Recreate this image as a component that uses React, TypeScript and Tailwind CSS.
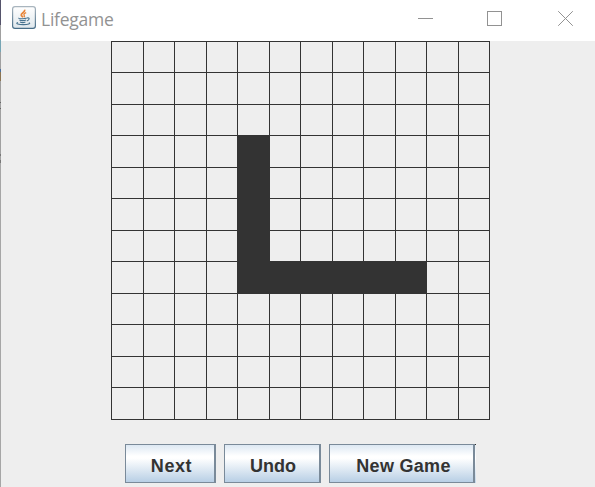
import React from "react";

const SIZE = 12;
const alive = new Set([
  "3-4", "4-4", "5-4", "6-4",
  "7-4", "7-5", "7-6", "7-7", "7-8", "7-9",
]);

function JavaIcon() {
  return (
    <svg width="24" height="23" viewBox="0 0 24 23" fill="none" className="shrink-0">
      <defs>
        <linearGradient id="tile" x1="0" y1="0" x2="0" y2="1">
          <stop offset="0" stopColor="#ffffff" />
          <stop offset="1" stopColor="#dfe7ec" />
        </linearGradient>
        <linearGradient id="edge" x1="0" y1="0" x2="0" y2="1">
          <stop offset="0" stopColor="#a9b5be" />
          <stop offset="1" stopColor="#476d88" />
        </linearGradient>
      </defs>
      <rect x="0.6" y="0.6" width="22.8" height="21.8" rx="2.4" fill="url(#tile)" stroke="url(#edge)" strokeWidth="1.2" />
      <path d="M12.4 3.8c1.5 2.2-3.6 3.3-3.2 5.2.2 1 1.2 1.5 1.9 2.3" stroke="#e8853a" strokeWidth="1.7" />
      <path d="M14.2 6.7c-2 .8-2.8 1.5-2 2.6.5.7.6 1.2-.3 1.9" stroke="#e8853a" strokeWidth="1.3" />
      <path d="M7 12c-1.6.8 6 1 7.8 0M7.4 14c1.4.9 5 .8 6.6 0M8 15.9c1.4.7 4.2.6 5.4 0" stroke="#47728f" strokeWidth="1.1" />
      <path d="M15 12c3-.8 2.8 1.9-.2 3" stroke="#47728f" strokeWidth="1.1" />
      <path d="M6 16.6c-3.4 1.1.8 2 5.4 2 4.7 0 8-1 5.4-1.9" stroke="#47728f" strokeWidth="1.1" />
    </svg>
  );
}

function TitleBar() {
  return (
    <header className="flex h-[41px] items-start bg-white pl-[11px] text-[#929292]">
      <div className="pt-[6px]"><JavaIcon /></div>
      <h1 className="ml-[5px] mt-[7px] w-[73px] whitespace-nowrap font-['Open_Sans',sans-serif] text-[17.5px] leading-[25px] tracking-[-0.25px]">
        Lifegame
      </h1>
      <svg width="15" height="15" className="ml-[304px] mt-[11px] shrink-0" fill="none" stroke="currentColor" shapeRendering="crispEdges">
        <path d="M0 7.5h15" />
      </svg>
      <svg width="15" height="15" className="ml-[54px] mt-[11px] shrink-0" fill="none" stroke="currentColor" shapeRendering="crispEdges">
        <path d="M.5.5h14v14H.5z" />
      </svg>
      <svg width="15" height="15" className="ml-[56px] mt-[11px] shrink-0" fill="none" stroke="currentColor">
        <path d="M.2.2l14.6 14.6M14.8.2L.2 14.8" />
      </svg>
    </header>
  );
}

function Board() {
  return (
    <div className="ml-[110px] grid w-[379px] grid-cols-[repeat(6,32px_31px)] grid-rows-[repeat(6,31px_32px)] border-l border-t border-[#333333]">
      {Array.from({ length: SIZE * SIZE }, (_, i) => {
        const row = Math.floor(i / SIZE);
        const col = i % SIZE;
        return (
          <div
            key={i}
            className={
              alive.has(`${row}-${col}`)
                ? "border-b border-r border-[#333333] bg-[#333333]"
                : "border-b border-r border-[#333333]"
            }
          />
        );
      })}
    </div>
  );
}

function MetalButton({ label, className }: { label: string; className: string }) {
  return (
    <button
      className={`h-[39px] whitespace-nowrap border border-r-2 border-[#7a8a99] bg-[linear-gradient(to_bottom,#dde8f3_0%,#ffffff_30%,#ffffff_36%,#b8cfe5_100%)] pt-[4px] font-['Liberation_Sans',sans-serif] text-[18px] font-bold leading-[20px] text-[#333333] ${className}`}
    >
      {label}
    </button>
  );
}

export default function App() {
  return (
    <div className="flex h-[487px] w-[595px] overflow-hidden bg-[#eeeeee]">
      <div className="w-px shrink-0 bg-[linear-gradient(to_bottom,#55536b_0_25px,#a0a0a0_25px_40px,#76a5b4_40px_52px,#a0a0a0_52px_69px,#4b6f9c_69px_72px,#8b7452_72px_81px,#a0a0a0_81px_102px,#666666_102px_103px,#a0a0a0_103px_108px,#666666_108px_109px,#a0a0a0_109px_154px,#777777_154px_156px,#a0a0a0_156px_160px,#777777_160px_163px,#a6a6a6_163px)]" />
      <main className="w-[594px]">
        <TitleBar />
        <Board />
        <div className="mt-[24px] flex pl-[124px]">
          <MetalButton label="Next" className="w-[91px] pl-[3px] tracking-[0.6px]" />
          <MetalButton label="Undo" className="ml-[8px] w-[97px] pl-[2px]" />
          <MetalButton label="New Game" className="ml-[8px] w-[146px] pl-[4px] tracking-[0.3px]" />
          <div className="h-[39px] w-px bg-[linear-gradient(to_bottom,#333333_0_1px,#e6edf3_1px,#ffffff_14px,#c4d7e9_39px)]" />
        </div>
      </main>
    </div>
  );
}
